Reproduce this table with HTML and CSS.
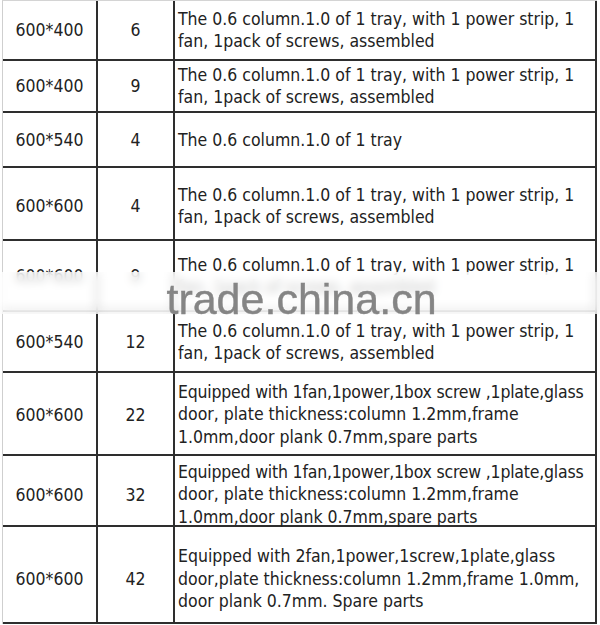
FILE: index.html
```html
<!DOCTYPE html>
<html>
<head>
<meta charset="utf-8">
<link rel="stylesheet" href="styles.css">
</head>
<body>
<div class="sheet">
  <div class="grid">
    <div class="cell c1 r1">600*400</div><div class="cell c2 r1">6</div><div class="cell c3 r1"><div>The 0.6 column.1.0 of 1 tray, with 1 power strip, 1<br>fan, 1pack of screws, assembled</div></div>
    <div class="cell c1 r2">600*400</div><div class="cell c2 r2">9</div><div class="cell c3 r2"><div>The 0.6 column.1.0 of 1 tray, with 1 power strip, 1<br>fan, 1pack of screws, assembled</div></div>
    <div class="cell c1 r3">600*540</div><div class="cell c2 r3">4</div><div class="cell c3 r3"><div>The 0.6 column.1.0 of 1 tray</div></div>
    <div class="cell c1 r4">600*600</div><div class="cell c2 r4">4</div><div class="cell c3 r4"><div>The 0.6 column.1.0 of 1 tray, with 1 power strip, 1<br>fan, 1pack of screws, assembled</div></div>
    <div class="cell c1 r5">600*600</div><div class="cell c2 r5">9</div><div class="cell c3 r5"><div>The 0.6 column.1.0 of 1 tray, with 1 power strip, 1<br>fan, 1pack of screws, assembled</div></div>
    <div class="cell c1 r6">600*540</div><div class="cell c2 r6">12</div><div class="cell c3 r6"><div>The 0.6 column.1.0 of 1 tray, with 1 power strip, 1<br>fan, 1pack of screws, assembled</div></div>
    <div class="cell c1 r7">600*600</div><div class="cell c2 r7">22</div><div class="cell c3 r7"><div><span class="tight">Equipped with 1fan,1power,1box screw ,1plate,glass</span><br>door, plate thickness:column 1.2mm,frame<br>1.0mm,door plank 0.7mm,spare parts</div></div>
    <div class="cell c1 r8">600*600</div><div class="cell c2 r8">32</div><div class="cell c3 r8"><div><span class="tight">Equipped with 1fan,1power,1box screw ,1plate,glass</span><br>door, plate thickness:column 1.2mm,frame<br>1.0mm,door plank 0.7mm,spare parts</div></div>
    <div class="cell c1 r9">600*600</div><div class="cell c2 r9">42</div><div class="cell c3 r9"><div>Equipped with 2fan,1power,1screw,1plate,glass<br>door,plate thickness:column 1.2mm,frame 1.0mm,<br>door plank 0.7mm. Spare parts</div></div>
  </div>
  <div class="watermark"><span class="wm-text">trade.china.cn</span></div>
</div>
</body>
</html>
```
FILE: styles.css
```css
html, body {
  margin: 0;
  padding: 0;
  background: #ffffff;
}
.sheet {
  position: relative;
  width: 600px;
  height: 625px;
  overflow: hidden;
}
.grid {
  display: grid;
  grid-template-columns: 95px 77px 422px;
  grid-template-rows: 60px 52px 55px 73px 71px 61px 83px 71px 97px;
  margin-left: 2px;
  border-left: 1px solid #cfcfcf;
  border-top: 1px solid #d4d4d4;
  width: 594px;
  font-family: "DejaVu Sans Condensed", "DejaVu Sans", sans-serif;
  font-stretch: condensed;
  font-size: 17.5px;
  line-height: 22px;
  color: #222222;
}
.cell {
  box-sizing: border-box;
  border-right: 2px solid #2e2e2e;
  border-bottom: 2px solid #2e2e2e;
  display: flex;
  align-items: center;
}
.c1, .c2 {
  justify-content: center;
}
.c3 {
  padding-left: 3px;
  white-space: nowrap;
}
.tight {
  letter-spacing: -0.2px;
}
.r4 {
  padding-top: 4px;
}
.c3.r7, .c3.r8, .c3.r9 {
  line-height: 22.5px;
}
.r7 {
  padding-top: 2px;
}
.r8 {
  padding-top: 8px;
}
.r9 {
  padding-top: 9px;
}
.watermark {
  position: absolute;
  left: 0;
  top: 272px;
  width: 600px;
  height: 42px;
  background: rgba(255, 255, 255, 0.72);
  backdrop-filter: blur(5px);
  display: flex;
  justify-content: center;
  align-items: flex-end;
}
.wm-text {
  font-family: "Liberation Sans", Arial, sans-serif;
  font-size: 43px;
  line-height: 43px;
  color: #858585;
  -webkit-text-stroke: 0.4px #858585;
  margin-bottom: -7px;
  margin-left: 3px;
}
```
